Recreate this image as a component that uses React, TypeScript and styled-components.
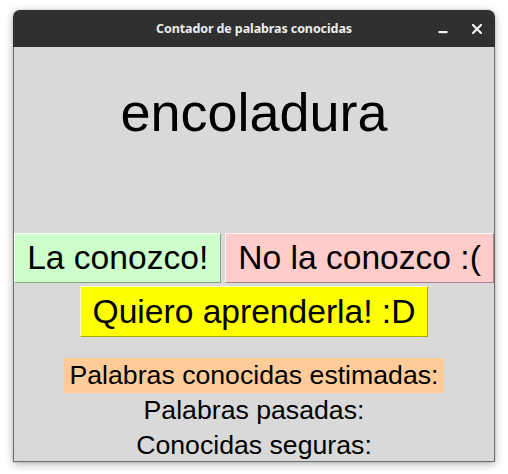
import React from "react";
import styled, { createGlobalStyle } from "styled-components";

const GlobalStyle = createGlobalStyle`
  html, body {
    margin: 0;
    padding: 0;
    background: #ffffff;
  }
`;

const Page = styled.div`
  padding: 10px 0 0 13px;
  width: 508px;
  height: 474px;
  box-sizing: border-box;
  overflow: hidden;
`;

const Window = styled.div`
  width: 482px;
  height: 452px;
  display: flex;
  flex-direction: column;
  border-radius: 7px 7px 0 0;
  box-shadow: 0 2px 9px rgba(0, 0, 0, 0.32), 0 0 1px rgba(0, 0, 0, 0.4);
  overflow: hidden;
`;

const TitleBar = styled.div`
  height: 37px;
  flex: none;
  background: #303030;
  display: grid;
  grid-template-columns: 1fr auto 1fr;
  align-items: center;
`;

const Title = styled.div`
  grid-column: 2;
  font-family: "Noto Sans", sans-serif;
  font-weight: 700;
  font-size: 12.5px;
  color: #ececec;
  letter-spacing: -0.1px;
`;

const Controls = styled.div`
  grid-column: 3;
  justify-self: end;
  display: flex;
  align-items: center;
  gap: 10px;
  padding-right: 6px;
`;

const ControlButton = styled.div`
  width: 24px;
  height: 24px;
  display: flex;
  align-items: center;
  justify-content: center;
`;

const Content = styled.div`
  flex: 1;
  background: #d9d9d9;
  border: 1px solid #707070;
  border-top: none;
  display: flex;
  flex-direction: column;
  align-items: center;
  overflow: hidden;
  font-family: "Liberation Sans", Arial, sans-serif;
  color: #000;
`;

const Word = styled.div`
  font-size: 54px;
  line-height: 61px;
  margin-top: 35px;
  margin-bottom: 90px;
  white-space: nowrap;
`;

const ButtonRow = styled.div`
  display: flex;
  gap: 4px;
  justify-content: center;
  align-self: stretch;
`;

const ChoiceButton = styled.div<{ $bg: string }>`
  background: ${(p) => p.$bg};
  height: 50px;
  box-sizing: border-box;
  display: flex;
  align-items: center;
  flex-shrink: 0;
  white-space: nowrap;
  padding: 0 12px;
  font-size: 33.6px;
  border-top: 1px solid rgba(255, 255, 255, 0.8);
  border-left: 1px solid rgba(255, 255, 255, 0.8);
  border-bottom: 1px solid rgba(0, 0, 0, 0.35);
  border-right: 1px solid rgba(0, 0, 0, 0.35);
`;

const LearnButton = styled(ChoiceButton)`
  margin-top: 3px;
  height: 51px;
`;

const Stat = styled.div<{ $bg?: string }>`
  font-size: 26.67px;
  line-height: 31px;
  padding: 2px 6px;
  white-space: nowrap;
  background: ${(p) => p.$bg ?? "transparent"};
`;

const StatGroup = styled.div`
  margin-top: 21px;
  display: flex;
  flex-direction: column;
  align-items: center;
`;

export default function App() {
  return (
    <>
      <GlobalStyle />
      <Page>
        <Window>
          <TitleBar>
            <Title>Contador de palabras conocidas</Title>
            <Controls>
              <ControlButton>
                <svg width="10" height="10" viewBox="0 0 10 10">
                  <rect x="0.5" y="7" width="9" height="2.2" fill="#f2f2f2" />
                </svg>
              </ControlButton>
              <ControlButton>
                <svg width="10" height="10" viewBox="0 0 10 10">
                  <path d="M1 1 L9 9 M9 1 L1 9" stroke="#f2f2f2" strokeWidth="2.2" strokeLinecap="square" />
                </svg>
              </ControlButton>
            </Controls>
          </TitleBar>
          <Content>
            <Word>encoladura</Word>
            <ButtonRow>
              <ChoiceButton $bg="#ccffcc">La conozco!</ChoiceButton>
              <ChoiceButton $bg="#ffcccc">No la conozco :(</ChoiceButton>
            </ButtonRow>
            <LearnButton $bg="#ffff00">Quiero aprenderla! :D</LearnButton>
            <StatGroup>
              <Stat $bg="#ffcc99">Palabras conocidas estimadas:</Stat>
              <Stat>Palabras pasadas:</Stat>
              <Stat>Conocidas seguras:</Stat>
            </StatGroup>
          </Content>
        </Window>
      </Page>
    </>
  );
}
